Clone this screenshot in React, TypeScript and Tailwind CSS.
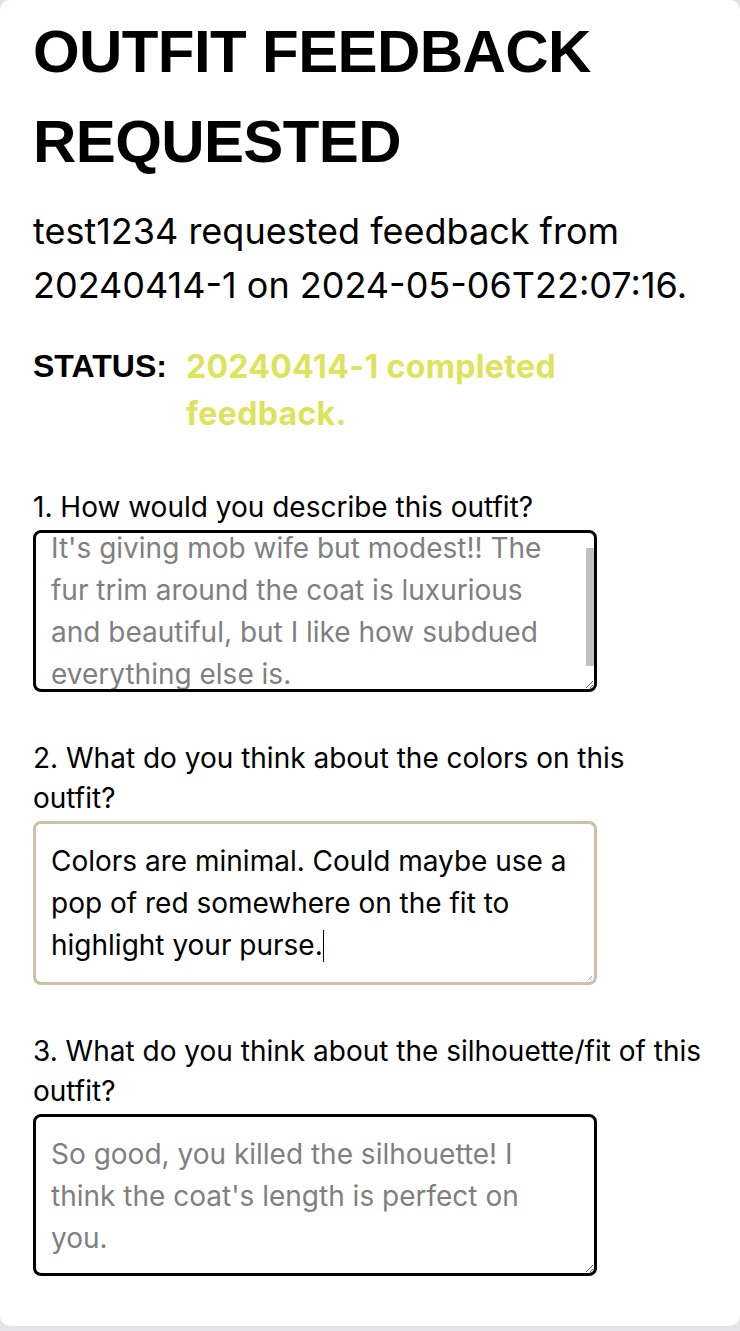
import { useEffect, useRef } from 'react';

const answerBox =
  'block rounded-[8px] border-[3px] px-[15px] py-[16px] text-[28px] leading-[42px] outline-none resize-y [scrollbar-width:none]';

function ReadOnlyAnswer({ answer, scroll = 0 }: { answer: string; scroll?: number }) {
  const ref = useRef<HTMLTextAreaElement>(null);

  useEffect(() => {
    if (ref.current && scroll) ref.current.scrollTop = scroll;
  }, [scroll]);

  return (
    <div className="relative w-[564px]">
      <textarea
        ref={ref}
        readOnly
        value={answer}
        className={`${answerBox} w-full h-[162px] border-black text-[#808080]`}
      />
      {scroll > 0 && <div className="absolute right-[3px] top-[18px] w-[8px] h-[118px] bg-[#c1c1c1]" aria-hidden />}
    </div>
  );
}

// focused answer, drawn with its text cursor at the end
function ActiveAnswer({ answer }: { answer: string }) {
  return (
    <div className={`${answerBox} relative w-[564px] h-[164px] border-[#cdc0aa] text-black`}>
      {answer}
      <span className="inline-block w-[1.5px] h-[32px] bg-black align-[-7px]" />
      <svg className="absolute right-[1px] bottom-[1px]" width="6" height="6" viewBox="0 0 6 6" aria-hidden>
        <path d="M5 1 L1 5 M5 3.5 L3.5 5" stroke="#8a8a8a" strokeWidth="0.8" />
      </svg>
    </div>
  );
}

function Question({ label, children }: { label: string; children: React.ReactNode }) {
  return (
    <div className="flex flex-col">
      <label className="w-[672px] text-[28px] leading-[40px] text-black mb-[3px]">{label}</label>
      {children}
    </div>
  );
}

export default function App() {
  return (
    <div className="min-h-[1331px] bg-[#e4e4e6] font-['Inter','Noto_Sans',sans-serif]">
      <div className="bg-white rounded-[10px] pl-[33px] pr-[24px] pt-[7px] pb-[50px]">
        <h1 className="font-['Liberation_Sans','Arial',sans-serif] font-bold text-[60px] leading-[90px] tracking-[-0.6px] text-black">
          OUTFIT FEEDBACK
          <br />
          REQUESTED
        </h1>
        <p className="mt-[17px] text-[36px] leading-[54px] text-black">
          test1234 requested feedback from
          <br />
          20240414-1 on 2024-05-06T22:07:16.
        </p>
        <div className="mt-[31px] flex gap-[19px] w-[564px]">
          <span className="font-['Liberation_Sans','Arial',sans-serif] font-bold text-[32px] leading-[47px] text-black shrink-0">
            STATUS:
          </span>
          <span className="font-bold text-[32px] leading-[47px] tracking-[0.35px] text-[#dde35a]">
            20240414-1 completed feedback.
          </span>
        </div>
        <div className="mt-[50px] flex flex-col gap-[46px]">
          <Question label="1. How would you describe this outfit?">
            <ReadOnlyAnswer
              scroll={22}
              answer="It's giving mob wife but modest!! The fur trim around the coat is luxurious and beautiful, but I like how subdued everything else is."
            />
          </Question>
          <Question label="2. What do you think about the colors on this outfit?">
            <ActiveAnswer answer="Colors are minimal. Could maybe use a pop of red somewhere on the fit to highlight your purse." />
          </Question>
          <Question label="3. What do you think about the silhouette/fit of this outfit?">
            <ReadOnlyAnswer answer="So good, you killed the silhouette! I think the coat's length is perfect on you." />
          </Question>
        </div>
      </div>
    </div>
  );
}
